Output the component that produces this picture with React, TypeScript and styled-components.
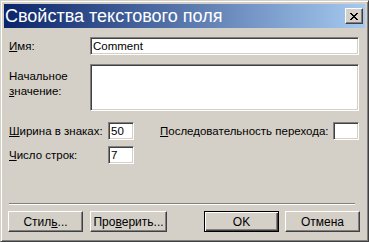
import React from 'react'
import styled, { createGlobalStyle } from 'styled-components'

const GlobalStyle = createGlobalStyle`
    html, body {
        margin: 0;
        padding: 0;
        background: #d4d0c8;
    }
    * {
        box-sizing: border-box;
    }
`

/**
 * App
 *
 */
const App = () => {
    return (
        <>
            <GlobalStyle />
            <Window>
                <TitleBar>
                    <Title>Свойства текстового поля</Title>
                    <CloseButton>
                        <svg width="8" height="7" viewBox="0 0 8 7" shapeRendering="crispEdges">
                            <path d="M0 0h2v1h-2zM6 0h2v1h-2zM1 1h2v1h-2zM5 1h2v1h-2zM2 2h4v1h-4zM3 3h2v1h-2zM2 4h4v1h-4zM1 5h2v1h-2zM5 5h2v1h-2zM0 6h2v1h-2zM6 6h2v1h-2z" fill="#000" />
                        </svg>
                    </CloseButton>
                </TitleBar>

                <Body>
                    <Form>
                        <Row $top={9}>
                            <Label $width={81}><u>И</u>мя:</Label>
                            <Field readOnly value="Comment" />
                        </Row>
                        <Row $top={9} $align="flex-start">
                            <Label $width={81} $pad={5}>Начальное<br /><u>з</u>начение:</Label>
                            <Area readOnly value="" />
                        </Row>
                        <Row $top={11}>
                            <Label $width={99}><u>Ш</u>ирина в знаках:</Label>
                            <Field readOnly value="50" $width={26} />
                            <Label $grow $gap={26}><u>П</u>оследовательность перехода:</Label>
                            <Field readOnly value="" $width={26} />
                        </Row>
                        <Row $top={6}>
                            <Label $width={99}><u>Ч</u>исло строк:</Label>
                            <Field readOnly value="7" $width={26} />
                        </Row>
                    </Form>

                    <Separator />

                    <Buttons>
                        <Button $width={75}>Стил<u>ь</u>...</Button>
                        <Button $width={77} $gap={7}>Про<u>в</u>ерить...</Button>
                        <Spacer />
                        <Button $width={75} $default>OK</Button>
                        <Button $width={75} $gap={6}>Отмена</Button>
                    </Buttons>
                </Body>
            </Window>
        </>
    )
}

export default App

/**
 * Window
 *
 */
const Window = styled.div`
    width: 369px;
    height: 242px;
    display: flex;
    flex-direction: column;
    padding: 3px;
    background: #d4d0c8;
    border: 1px solid;
    border-color: #d4d0c8 #404040 #404040 #d4d0c8;
    box-shadow: inset 1px 1px #ffffff, inset -1px -1px #808080;
    font-family: "Liberation Sans", Arial, sans-serif;
    font-size: 11.5px;
    color: #000;
`

const TitleBar = styled.div`
    height: 24px;
    display: flex;
    align-items: center;
    padding: 0 2px 0 1px;
    background: linear-gradient(to right, #0a246a, #a6caf0);
`

const Title = styled.span`
    flex: 1;
    color: #ffffff;
    font-size: 18px;
    line-height: 24px;
    white-space: nowrap;
`

const CloseButton = styled.div`
    width: 18px;
    height: 16px;
    display: flex;
    align-items: center;
    justify-content: center;
    background: #d4d0c8;
    border: 1px solid;
    border-color: #ffffff #404040 #404040 #ffffff;
    box-shadow: inset -1px -1px #808080;
`

const Body = styled.div`
    flex: 1;
    display: flex;
    flex-direction: column;
    padding: 0 5px 6px 4px;
`

const Form = styled.div`
    display: flex;
    flex-direction: column;
    padding: 0 1px 0 1px;
`

const Row = styled.div<{ $top: number; $align?: string }>`
    display: flex;
    align-items: ${p => p.$align || 'center'};
    margin-top: ${p => p.$top}px;
`

const Label = styled.label<{ $width?: number; $grow?: boolean; $gap?: number; $pad?: number }>`
    ${p => p.$width ? `width: ${p.$width}px;` : ''}
    ${p => p.$grow ? 'flex: 1;' : ''}
    margin-left: ${p => p.$gap || 0}px;
    padding-top: ${p => p.$pad || 0}px;
    line-height: 15px;
    white-space: nowrap;
`

const sunken = `
    border: 1px solid;
    border-color: #808080 #ffffff #ffffff #808080;
    box-shadow: inset 1px 1px #404040, inset -1px -1px #d4d0c8;
    background: #ffffff;
    font-family: "Liberation Sans", Arial, sans-serif;
    font-size: 11.5px;
    color: #000;
    outline: none;
    margin: 0;
`

const Field = styled.input<{ $width?: number }>`
    ${sunken}
    ${p => p.$width ? `width: ${p.$width}px;` : 'flex: 1; min-width: 0;'}
    height: 18px;
    padding: 0 2px;
`

const Area = styled.textarea`
    ${sunken}
    flex: 1;
    height: 47px;
    resize: none;
    padding: 2px;
`

const Separator = styled.div`
    margin: auto 5px 0 1px;
    height: 2px;
    border-top: 1px solid #808080;
    border-bottom: 1px solid #ffffff;
`

const Buttons = styled.div`
    display: flex;
    margin-top: 6px;
`

const Spacer = styled.div`
    flex: 1;
`

const Button = styled.div<{ $width: number; $default?: boolean; $gap?: number }>`
    width: ${p => p.$width}px;
    height: 21px;
    margin-left: ${p => p.$gap || 0}px;
    display: flex;
    align-items: center;
    justify-content: center;
    border: 1px solid;
    border-color: ${p => p.$default ? '#000' : '#ffffff #404040 #404040 #ffffff'};
    box-shadow: ${p => p.$default
        ? 'inset 1px 1px #ffffff, inset -1px -1px #404040, inset -2px -2px #808080'
        : 'inset -1px -1px #808080'};
    background: #d4d0c8;
    font-size: 12px;
    white-space: nowrap;
`
